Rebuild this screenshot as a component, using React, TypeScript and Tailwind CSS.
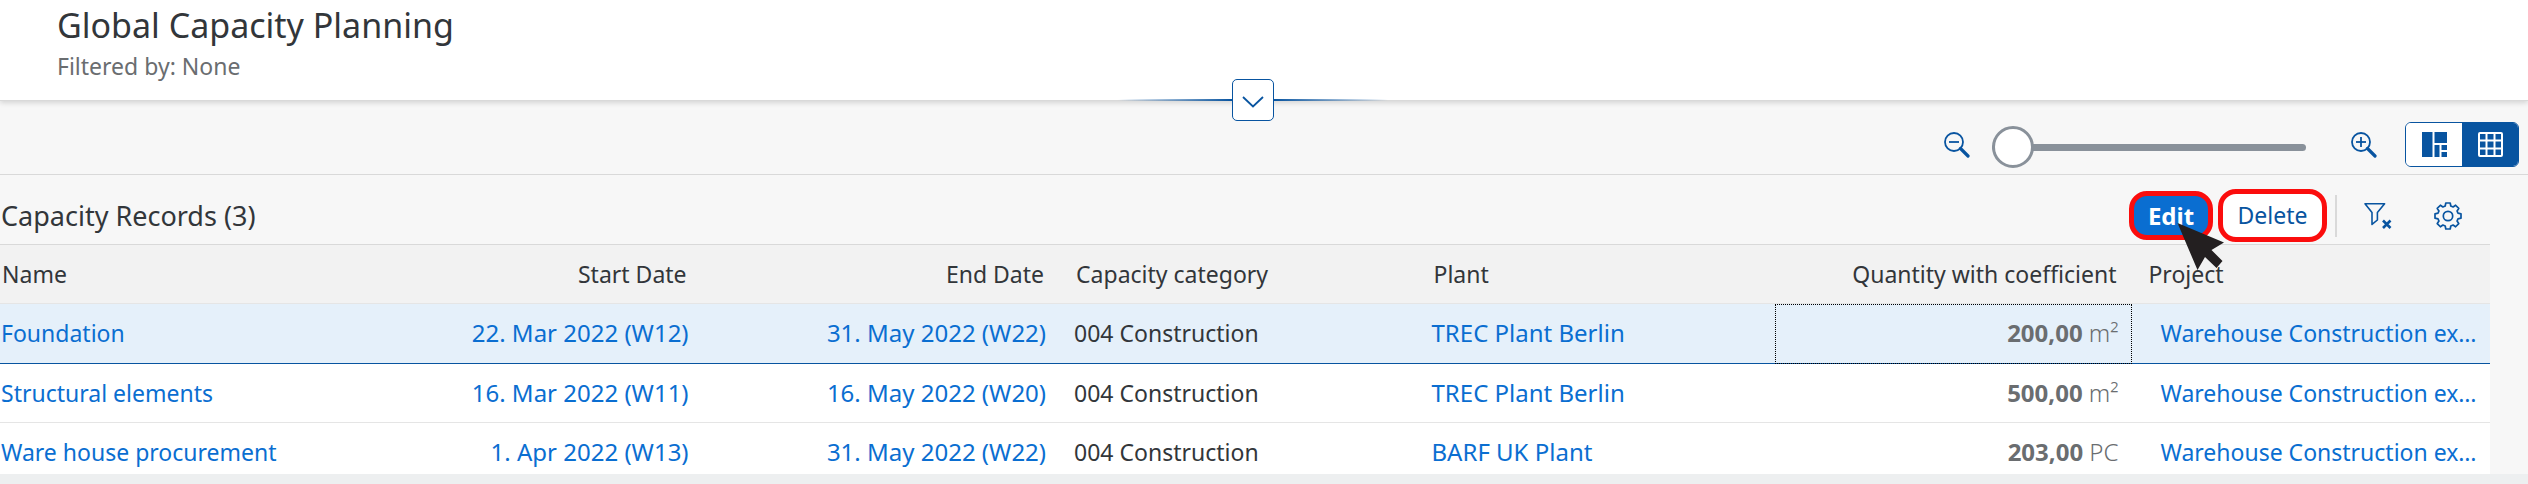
import React from 'react';
import clsx from 'clsx';

interface CapacityRecord {
  name: string;
  start: string;
  end: string;
  category: string;
  plant: string;
  quantity: string;
  unit: string;
  project: string;
}

const records: CapacityRecord[] = [
  {
    name: 'Foundation',
    start: '22. Mar 2022 (W12)',
    end: '31. May 2022 (W22)',
    category: '004 Construction',
    plant: 'TREC Plant Berlin',
    quantity: '200,00',
    unit: 'm²',
    project: 'Warehouse Construction ex…',
  },
  {
    name: 'Structural elements',
    start: '16. Mar 2022 (W11)',
    end: '16. May 2022 (W20)',
    category: '004 Construction',
    plant: 'TREC Plant Berlin',
    quantity: '500,00',
    unit: 'm²',
    project: 'Warehouse Construction ex…',
  },
  {
    name: 'Ware house procurement',
    start: '1. Apr 2022 (W13)',
    end: '31. May 2022 (W22)',
    category: '004 Construction',
    plant: 'BARF UK Plant',
    quantity: '203,00',
    unit: 'PC',
    project: 'Warehouse Construction ex…',
  },
];

const ZoomIcon: React.FC<{ plus?: boolean }> = ({ plus = false }) => (
  <svg width="26" height="26" viewBox="0 0 26 26" fill="none" stroke="currentColor" strokeWidth="1.8">
    <circle cx="10" cy="10" r="9" />
    <path d="M5 10h10" />
    {plus && <path d="M10 5v10" />}
    <path d="M16.5 16.5l7.500 7.500" strokeWidth="3.200" strokeLinecap="round" />
  </svg>
);

const FilterClearIcon = () => (
  <svg width="28" height="28" viewBox="0 0 28 28" fill="none" stroke="currentColor" strokeWidth="1.6">
    <path d="M1 1.8h19.600L13.400 10.5v7.5L8 22.4V10.5z" strokeLinejoin="round" />
    <path d="M19 18.500l7.500 7.500M26.500 18.500l-7.500 7.500" strokeWidth="2.6" />
  </svg>
);

const GearIcon = () => (
  <svg width="28" height="28" viewBox="0 0 28 28" fill="none" stroke="currentColor" strokeWidth="1.7" strokeLinejoin="round">
    <circle cx="14" cy="14" r="4.7" />
    <path d="M11.200 4L11.800 1H16.200L16.800 4L19.100 4.950L21.600 3.250L24.750 6.400L23.050 8.900L24 11.200L27 11.800V16.200L24 16.800L23.050 19.100L24.750 21.600L21.600 24.750L19.100 23.050L16.800 24L16.200 27H11.800L11.200 24L8.900 23.050L6.400 24.750L3.250 21.600L4.950 19.100L4 16.800L1 16.200V11.800L4 11.200L4.950 8.900L3.250 6.400L6.400 3.250L8.900 4.950Z" />
  </svg>
);

const ChartViewIcon = () => (
  <svg width="25" height="25" viewBox="0 0 25 25" fill="currentColor">
    <path d="M0 0h10.5v25H0zM12.5 0H25v11H12.5zM12.5 13h5v12h-5zM19.500 13H25v5h-5.500zM19.500 20H25v5h-5.500z" />
  </svg>
);

const GridViewIcon = () => (
  <svg width="25" height="25" viewBox="0 0 25 25" fill="none" stroke="currentColor" strokeWidth="2">
    <rect x="1" y="1" width="23" height="23" rx="1" />
    <path d="M8.5 1v23M16.5 1v23M1 8.500h23M1 16.500h23" />
  </svg>
);

const PageHeader = () => (
  <header className="relative z-10 bg-white border-b border-[#d9d9d9] shadow-[0_2px_5px_rgba(0,0,0,0.14)] pl-[57px] pt-[2px] pb-4 text-[#32363a]">
    <h1 className="text-[34px] leading-[46px]">Global Capacity Planning</h1>
    <p className="text-[23px] leading-9 text-[#6a6d70]">Filtered by: None</p>
    {/* expand button sits over the header's bottom edge */}
    <div className="absolute inset-x-0 -bottom-[21px] flex justify-center items-center pr-[22px]">
      <span className="w-[114px] h-[2px] bg-linear-to-r from-transparent to-[#0854a0]" />
      <button aria-label="Expand header" className="w-[42px] h-[42px] flex justify-center items-center bg-white border border-[#0854a0] rounded-[5px] text-[#0854a0]">
        <svg width="22" height="12" viewBox="0 0 22 12" fill="none" stroke="currentColor" strokeWidth="1.8" className="mt-1">
          <path d="M1 1l10 9.5L21 1" />
        </svg>
      </button>
      <span className="w-[114px] h-[2px] bg-linear-to-l from-transparent to-[#0854a0]" />
    </div>
  </header>
);

const ViewBar = () => (
  <div className="flex justify-end items-center h-[74px] pr-[9px] pt-[14px] border-b border-[#d9d9d9] text-[#0854a0]">
    <button aria-label="Zoom out" className="mr-[22px]">
      <ZoomIcon />
    </button>
    <input
      type="range"
      aria-label="Zoom"
      min={0}
      max={10}
      defaultValue={0}
      className="appearance-none w-[314px] h-[42px] mt-[6px] mr-[45px] bg-transparent [&::-webkit-slider-runnable-track]:h-[7px] [&::-webkit-slider-runnable-track]:rounded-full [&::-webkit-slider-runnable-track]:bg-[#89919a] [&::-webkit-slider-thumb]:appearance-none [&::-webkit-slider-thumb]:size-[42px] [&::-webkit-slider-thumb]:-mt-[18px] [&::-webkit-slider-thumb]:rounded-full [&::-webkit-slider-thumb]:border-3 [&::-webkit-slider-thumb]:border-[#89919a] [&::-webkit-slider-thumb]:bg-white"
    />
    <button aria-label="Zoom in" className="mr-7">
      <ZoomIcon plus />
    </button>
    <div className="flex h-[45px] border border-[#0854a0] rounded-[6px] overflow-hidden">
      <button aria-label="Chart view" className="w-14 flex justify-center items-center bg-white">
        <ChartViewIcon />
      </button>
      <button aria-label="Table view" className="w-14 flex justify-center items-center bg-[#0854a0] text-white">
        <GridViewIcon />
      </button>
    </div>
  </div>
);

const TableToolbar = () => (
  <div className="flex items-center h-[69px] pt-3 pl-px pr-[66px] text-[#0854a0]">
    <h2 className="text-[27px] leading-8 text-[#32363a] mr-auto">Capacity Records (3)</h2>
    <div className="relative z-10 mr-[5px]">
      <button className="block w-[84px] h-[49px] border-5 border-[#fb0d0d] rounded-[18px] bg-[#0a6ed1] text-white text-2xl font-bold leading-none">
        Edit
      </button>
      <svg width="48" height="48" viewBox="0 0 48 48" fill="#231f20" className="absolute left-12 top-8">
        <path d="M0.5 0L47 19.500 34.500 27 45.500 38 39.500 45 28 34 20.500 47z" />
      </svg>
    </div>
    <button className="w-[109px] h-[53px] border-5 border-[#fb0d0d] rounded-[18px] bg-white text-[23px] leading-none">
      Delete
    </button>
    <span className="w-[2px] h-[42px] bg-[#d9d9d9] ml-2 mr-[27px]" />
    <button aria-label="Clear filter" className="mr-[42px]">
      <FilterClearIcon />
    </button>
    <button aria-label="Settings">
      <GearIcon />
    </button>
  </div>
);

const RecordRow: React.FC<{ record: CapacityRecord; isActive?: boolean; isLast?: boolean }> = ({
  record,
  isActive = false,
  isLast = false,
}) => {
  const cell = clsx('pt-[13px]', isActive ? 'pb-[14px]' : isLast ? 'pb-[6px]' : 'pb-[13px]');
  return (
    <tr
      className={clsx(
        isActive && 'bg-[#e5f0fa] border-b border-[#0854a0]',
        !isActive && 'bg-white',
        !isActive && !isLast && 'border-b border-[#e5e5e5]'
      )}
    >
      <td className={clsx(cell, 'pl-px text-[23px]')}>
        <a href="#name" className="text-[#0a6ed1]">{record.name}</a>
      </td>
      <td className={clsx(cell, 'pr-[14px] text-right')}>
        <a href="#start" className="text-[#0a6ed1]">{record.start}</a>
      </td>
      <td className={clsx(cell, 'pr-[14px] text-right')}>
        <a href="#end" className="text-[#0a6ed1]">{record.end}</a>
      </td>
      <td className={clsx(cell, 'pl-[14px] text-[23px]')}>{record.category}</td>
      <td className={clsx(cell, 'pl-[14px]')}>
        <a href="#plant" className="text-[#0a6ed1]">{record.plant}</a>
      </td>
      <td className={clsx(cell, 'pr-[14px] text-right text-[#6a6d70]', isActive && 'outline-dotted outline-1 -outline-offset-1 outline-black')}>
        <span className="font-bold">{record.quantity}</span> <span className="font-light">{record.unit}</span>
      </td>
      <td className={clsx(cell, 'pl-7 text-[23px] whitespace-nowrap')}>
        <a href="#project" className="text-[#0a6ed1]">{record.project}</a>
      </td>
    </tr>
  );
};

const RecordsTable = () => (
  <div className="pr-[38px]">
    <table className="w-full table-fixed border-collapse text-2xl leading-8 text-[#32363a]">
      <thead>
        <tr className="bg-[#f2f2f2] border-t border-t-[#d9d9d9] border-b border-b-[#e5e5e5] text-left text-[23px]">
          <th className="w-[13.86%] py-[13px] pl-[2px] font-normal">Name</th>
          <th className="pr-4 font-normal text-right">Start Date</th>
          <th className="pr-4 font-normal text-right">End Date</th>
          <th className="pl-4 font-normal">Capacity category</th>
          <th className="pl-4 font-normal">Plant</th>
          <th className="pr-4 font-normal text-right">Quantity with coefficient</th>
          <th className="pl-4 font-normal">Project</th>
        </tr>
      </thead>
      <tbody>
        {records.map((record, i) => (
          <RecordRow key={record.name} record={record} isActive={i === 0} isLast={i === records.length - 1} />
        ))}
      </tbody>
    </table>
  </div>
);

export default function App() {
  return (
    <div className="bg-[#f7f7f7] font-['Noto_Sans',sans-serif]">
      <PageHeader />
      <ViewBar />
      <TableToolbar />
      <RecordsTable />
      <div className="h-[10px] bg-[#edeff0]" />
    </div>
  );
}
